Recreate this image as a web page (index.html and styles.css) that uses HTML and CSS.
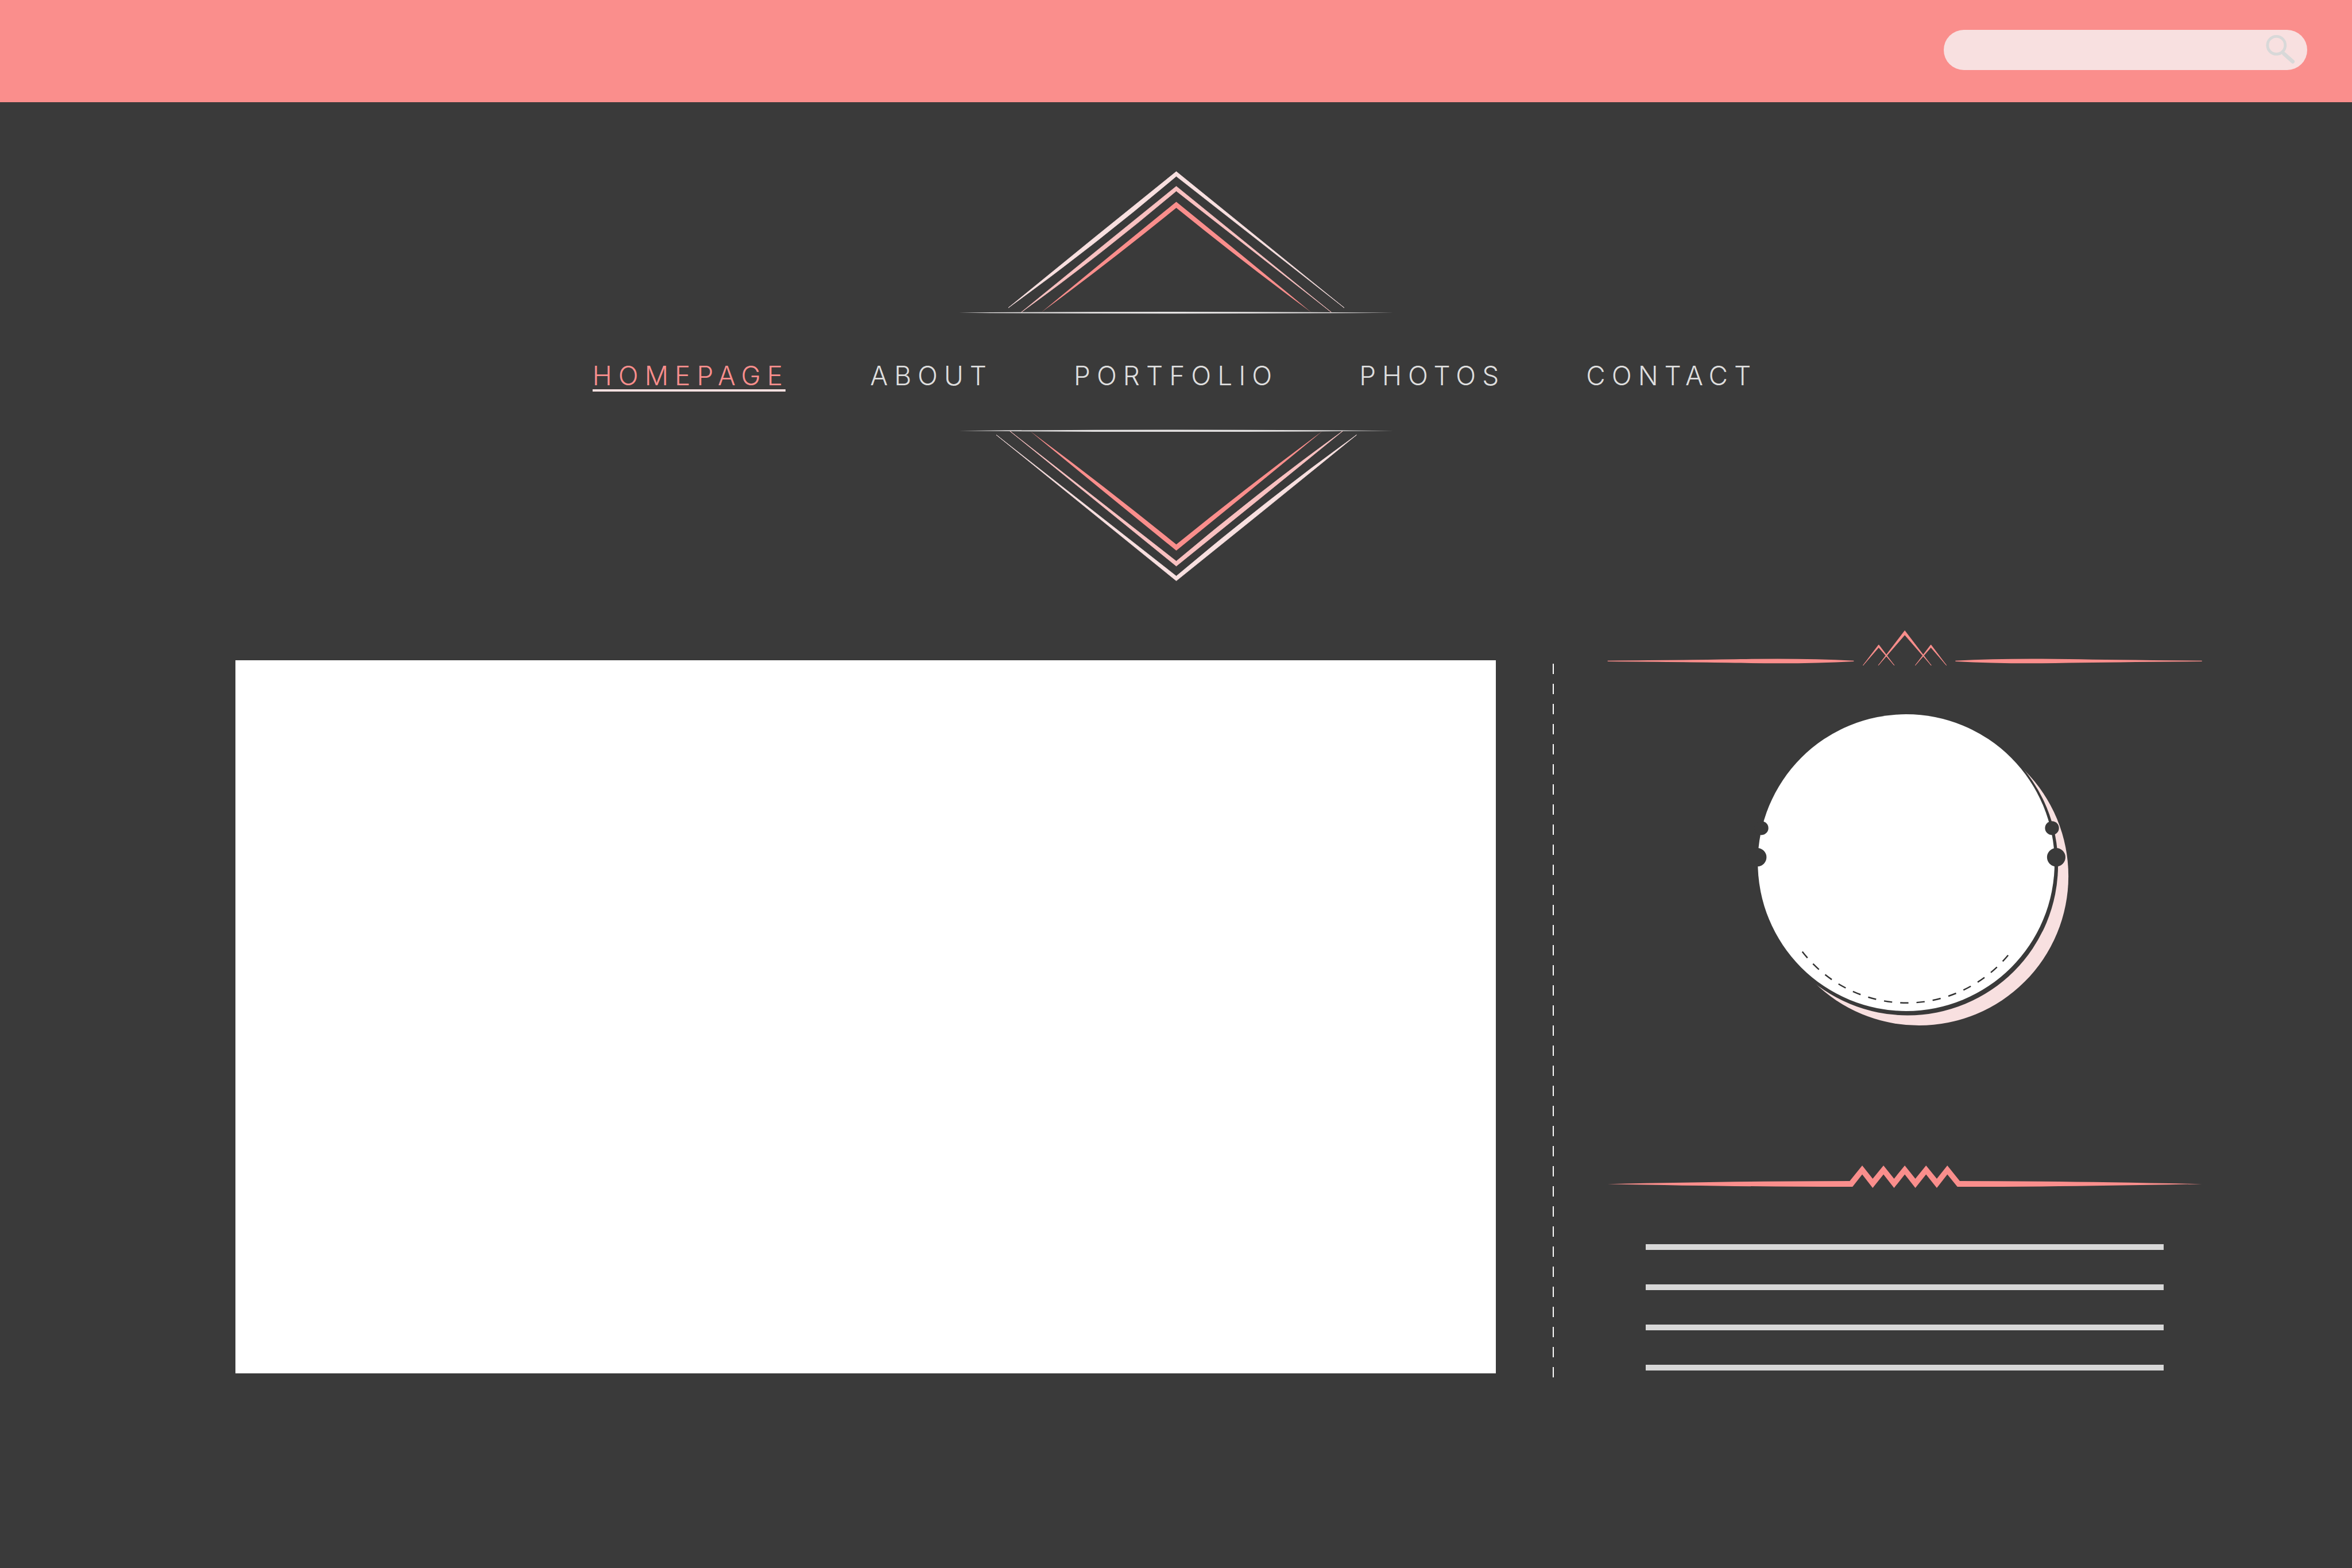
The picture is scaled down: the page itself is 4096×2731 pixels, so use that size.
FILE: index.html
```html
<!DOCTYPE html>
<html lang="en">
<head>
<meta charset="utf-8">
<meta name="viewport" content="width=device-width, initial-scale=1">
<title>Homepage</title>
<link rel="stylesheet" href="styles.css">
</head>
<body>
<header class="topbar">
  <form class="search" role="search">
    <input class="search-input" type="search" aria-label="Search">
    <button class="search-button" type="submit" aria-label="Search">
      <svg class="search-icon" viewBox="4812 68 68 70" aria-hidden="true">
        <circle cx="4839" cy="96" r="19"/>
        <path class="handle" d="M4855 114L4874 131"/>
      </svg>
    </button>
  </form>
</header>

<section class="masthead">
  <svg class="crest" viewBox="2038 360 924 310" aria-hidden="true">
    <path class="pale" d="M2143 654.3Q2321.5 508 2500 364.7L2857 654.3L2500 374.7Q2321.5 525.5 2143 654.3Z"/>
    <path class="blush" d="M2170.6 663.7Q2335.3 529 2500 396L2829.4 663.7L2500 406Q2335.3 545 2170.6 663.7Z"/>
    <path class="coral" d="M2213.5 663.7Q2356.7 545 2500 429Q2643.3 545 2786.5 663.7Q2643.3 558 2500 441.7Q2356.7 558 2213.5 663.7Z"/>
    <path class="rule" d="M2038 664.7Q2500 660.7 2962 664.7Q2500 668.7 2038 664.7Z"/>
  </svg>
  <nav class="nav" aria-label="Main">
    <ul class="nav-list">
      <li><a class="nav-link current" href="#home" aria-current="page">HOMEPAGE</a></li>
      <li><a class="nav-link" href="#about">ABOUT</a></li>
      <li><a class="nav-link" href="#portfolio">PORTFOLIO</a></li>
      <li><a class="nav-link" href="#photos">PHOTOS</a></li>
      <li><a class="nav-link" href="#contact">CONTACT</a></li>
    </ul>
  </nav>
  <svg class="crest" viewBox="2038 912 924 328" aria-hidden="true">
    <path class="pale" d="M2117.3 924.7L2500 1235Q2691.7 1081 2883.3 924.7Q2691.7 1063 2500 1225Z"/>
    <path class="blush" d="M2145.5 916L2500 1203.7Q2677.3 1061 2854.5 916Q2677.3 1044 2500 1193.3Z"/>
    <path class="coral" d="M2189.6 917Q2344.8 1045 2500 1170.7Q2655.2 1045 2810.4 917Q2655.2 1032 2500 1157.7Q2344.8 1032 2189.6 917Z"/>
    <path class="rule" d="M2038 916Q2500 911.5 2962 916Q2500 920.5 2038 916Z"/>
  </svg>
</section>

<div class="content">
  <main class="panel"></main>
  <div class="separator"></div>
  <aside class="sidebar">
    <svg class="ornament" viewBox="3416 1338 1266 80" aria-hidden="true">
      <path class="coral" d="M3416.7 1404.8Q3600 1403.4 3700 1401.6Q3830 1399 3940.6 1404.8V1406.4Q3830 1412.4 3700 1409.6Q3600 1407.8 3416.7 1406.4Z"/>
      <path class="coral" d="M4681.7 1404.8Q4498 1403.4 4398 1401.6Q4268 1399 4157 1404.8V1406.4Q4268 1412.4 4398 1409.6Q4498 1407.8 4681.7 1406.4Z"/>
      <path class="coral peak" d="M3992.8 1415L4049.2 1341L4105.6 1415L4049.2 1350Z"/>
      <path class="coral peak" d="M3960.3 1415L3993.7 1371L4027 1415L3993.7 1376.5Z"/>
      <path class="coral peak" d="M4071.4 1415L4104.8 1371L4138 1415L4104.8 1376.5Z"/>
    </svg>
    <svg class="medallion" viewBox="3698 1518 702 664" aria-hidden="true">
      <circle class="pale" cx="4079" cy="1863.5" r="317.5"/>
      <circle class="ground" cx="4054.5" cy="1839.5" r="320"/>
      <circle class="disc" cx="4051.6" cy="1834.8" r="315.5"/>
      <circle class="ground" cx="3743.8" cy="1761.3" r="14.8"/>
      <circle class="ground" cx="3735" cy="1823.3" r="19.6"/>
      <circle class="ground" cx="4361.6" cy="1761.3" r="14.8"/>
      <circle class="ground" cx="4370.6" cy="1823.3" r="19.6"/>
      <path class="stitch" d="M3830.7 2024A280.3 280.3 0 0 0 4268.5 2031.5"/>
    </svg>
    <svg class="ornament" viewBox="3416 2478 1266 48" aria-hidden="true">
      <path class="coral" d="M3416.7 2517.3Q3720 2511 3932 2511L3958.6 2478L3980.9 2506L4003.9 2478L4026.4 2506L4049.2 2478L4071.7 2506L4094.5 2478L4117.4 2506L4139.8 2478L4166.3 2511Q4378 2511 4681.7 2517.3Q4378 2523.5 4161.2 2523.3L4139.8 2497L4117.4 2525.7L4094.5 2497L4071.7 2525.7L4049.2 2497L4026.4 2525.7L4003.9 2497L3980.9 2525.7L3958.6 2497L3938 2523.3Q3720 2523.5 3416.7 2517.3Z"/>
    </svg>
    <div class="lines">
      <div class="line"></div>
      <div class="line"></div>
      <div class="line"></div>
      <div class="line"></div>
    </div>
  </aside>
</div>
</body>
</html>
```
FILE: styles.css
```css
:root {
  --ground: #3a3a3a;
  --coral: #fa8e8c;
  --blush: #f9c1c1;
  --pale: #f8e0e0;
  --grey: #d8d8d8;
}

* {
  box-sizing: border-box;
}

body {
  margin: 0;
  min-height: 100vh;
  background: var(--ground);
  color: #dedede;
  font-family: Inter, "Open Sans", sans-serif;
}

svg {
  display: block;
}

.coral { fill: var(--coral); }
.blush { fill: var(--blush); }
.pale { fill: var(--pale); }
.ground { fill: var(--ground); }
.disc { fill: #fff; }
.rule { fill: #e4e2e2; }

/* Top bar */
.topbar {
  display: flex;
  justify-content: flex-end;
  padding: 52px 78px 56px;
  background: var(--coral);
}

.search {
  display: flex;
  align-items: flex-start;
  width: 633px;
  height: 70px;
  padding: 4px 20px 0 32px;
  border-radius: 35px;
  background: var(--pale);
}

.search-input {
  flex: 1;
  min-width: 0;
  height: 60px;
  padding: 0;
  border: 0;
  outline: 0;
  background: none;
  color: var(--ground);
  font: inherit;
  font-size: 32px;
}

.search-button {
  padding: 0;
  border: 0;
  background: none;
  cursor: pointer;
}

.search-icon {
  width: 56px;
  height: 57px;
  fill: none;
  stroke: var(--grey);
  stroke-width: 6;
}

.handle {
  stroke-width: 8;
  stroke-linecap: round;
}

/* Crest and navigation */
.masthead {
  display: flex;
  flex-direction: column;
  align-items: center;
  padding: 117px 0 0;
}

.crest {
  width: 757px;
}

.crest .pale {
  stroke: var(--pale);
  stroke-width: 1;
}

.crest .blush {
  stroke: var(--blush);
  stroke-width: 1;
}

.peak {
  stroke: var(--coral);
  stroke-width: 1;
}

.nav {
  padding: 81px 4px 65px 0;
}

.nav-list {
  display: flex;
  gap: 141px;
  margin: 0;
  padding: 0;
  list-style: none;
}

.nav-link {
  position: relative;
  display: block;
  height: 52px;
  color: inherit;
  font-size: 46px;
  font-weight: 300;
  line-height: 48px;
  letter-spacing: 11px;
  text-decoration: none;
}

.current {
  color: var(--coral);
}

.current::after {
  content: "";
  position: absolute;
  right: 6px;
  bottom: 0;
  left: 0;
  height: 4px;
  background: var(--pale);
}

/* Content and sidebar */
.content {
  display: flex;
  align-items: flex-start;
  padding: 80px 261px 0 410px;
}

.panel {
  flex: 2195 1 0;
  aspect-ratio: 2195 / 1242;
  margin: 54px 0 9px;
  background: #fff;
}

.separator {
  align-self: stretch;
  width: 2px;
  margin: 60px 93px 0 99px;
  background: repeating-linear-gradient(#fff 0 18px, transparent 18px 35px);
}

.sidebar {
  display: flex;
  flex: 1036 1 0;
  flex-direction: column;
  align-items: center;
}

.ornament {
  width: 100%;
}

.medallion {
  width: 575px;
  margin: 82px 0 243px;
}

.stitch {
  fill: none;
  stroke: #333;
  stroke-width: 3;
  stroke-dasharray: 17.5 17.1;
}

.lines {
  display: grid;
  gap: 60px;
  width: 87%;
  margin-top: 98px;
}

.line {
  height: 10px;
  background: var(--grey);
}
```
